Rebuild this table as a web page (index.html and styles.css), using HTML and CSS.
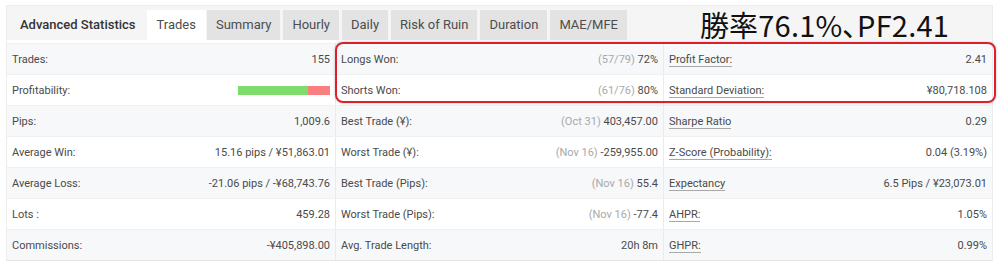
FILE: index.html
```html
<!DOCTYPE html>
<html lang="ja">
<head>
<meta charset="utf-8">
<link rel="stylesheet" href="styles.css">
</head>
<body>
<div class="panel">
  <div class="head">
    <div class="title">Advanced Statistics</div>
    <div class="tab active">Trades</div>
    <div class="tab">Summary</div>
    <div class="tab">Hourly</div>
    <div class="tab">Daily</div>
    <div class="tab">Risk of Ruin</div>
    <div class="tab">Duration</div>
    <div class="tab">MAE/MFE</div>
    <div class="annot">勝率76.1%、PF2.41</div>
  </div>
  <div class="table">
    <div class="row odd">
      <div class="cell"><span>Trades:</span><span>155</span></div>
      <div class="cell"><span>Longs Won:</span><span><span class="muted">(57/79)</span> 72%</span></div>
      <div class="cell"><span class="ul">Profit Factor:</span><span>2.41</span></div>
    </div>
    <div class="row">
      <div class="cell"><span>Profitability:</span><span class="bar"><span class="win" style="width:76%"></span><span class="loss"></span></span></div>
      <div class="cell"><span>Shorts Won:</span><span><span class="muted">(61/76)</span> 80%</span></div>
      <div class="cell"><span class="ul">Standard Deviation:</span><span>¥80,718.108</span></div>
    </div>
    <div class="row odd">
      <div class="cell"><span>Pips:</span><span>1,009.6</span></div>
      <div class="cell"><span>Best Trade (¥):</span><span><span class="muted">(Oct 31)</span> 403,457.00</span></div>
      <div class="cell"><span class="ul">Sharpe Ratio</span><span>0.29</span></div>
    </div>
    <div class="row">
      <div class="cell"><span>Average Win:</span><span>15.16 pips / ¥51,863.01</span></div>
      <div class="cell"><span>Worst Trade (¥):</span><span><span class="muted">(Nov 16)</span> -259,955.00</span></div>
      <div class="cell"><span class="ul">Z-Score (Probability):</span><span>0.04 (3.19%)</span></div>
    </div>
    <div class="row odd">
      <div class="cell"><span>Average Loss:</span><span>-21.06 pips / -¥68,743.76</span></div>
      <div class="cell"><span>Best Trade (Pips):</span><span><span class="muted">(Nov 16)</span> 55.4</span></div>
      <div class="cell"><span class="ul">Expectancy</span><span>6.5 Pips / ¥23,073.01</span></div>
    </div>
    <div class="row">
      <div class="cell"><span>Lots :</span><span>459.28</span></div>
      <div class="cell"><span>Worst Trade (Pips):</span><span><span class="muted">(Nov 16)</span> -77.4</span></div>
      <div class="cell"><span class="ul">AHPR:</span><span>1.05%</span></div>
    </div>
    <div class="row odd">
      <div class="cell"><span>Commissions:</span><span>-¥405,898.00</span></div>
      <div class="cell"><span>Avg. Trade Length:</span><span>20h 8m</span></div>
      <div class="cell"><span class="ul">GHPR:</span><span>0.99%</span></div>
    </div>
    <div class="highlight"></div>
  </div>
</div>
</body>
</html>
```
FILE: styles.css
```css
html, body {
  margin: 0;
  padding: 0;
  background: #ffffff;
}
body {
  font-family: Roboto, "Liberation Sans", sans-serif;
  color: #4a4a4a;
}
.panel {
  margin: 5px 7px 0 6px;
  border-left: 1px solid #ececec;
  border-right: 1px solid #ececec;
}
.head {
  display: flex;
  align-items: flex-end;
  height: 35px;
  background: #f5f5f5;
  border-top: 1px solid #eeeeee;
  box-sizing: border-box;
}
.title {
  font-size: 13px;
  font-weight: 500;
  color: #333;
  height: 30px;
  line-height: 30px;
  padding: 0 11px 0 13px;
}
.tab {
  font-size: 13px;
  color: #4d4d4d;
  background: #e3e3e3;
  height: 30px;
  line-height: 30px;
  padding: 0 9px;
  margin-right: 3px;
}
.tab.active {
  background: #ffffff;
  padding: 0 10px;
  margin-right: 1px;
}
.annot {
  margin-left: auto;
  margin-right: 43px;
  align-self: center;
  font-family: "Noto Sans CJK JP", sans-serif;
  font-feature-settings: "palt";
  font-size: 29px;
  letter-spacing: 0.2px;
  line-height: 30px;
  color: #111;
  padding-top: 1px;
}
.table {
  position: relative;
  padding-top: 3px;
  border-bottom: 1px solid #e6e6e6;
}
.row {
  display: grid;
  grid-template-columns: 329px 328px 1fr;
  height: 31px;
  background: #ffffff;
  border-top: 1px solid #f0f0f0;
  box-sizing: border-box;
}
.row.odd {
  background: #f6f8fa;
}
.cell {
  display: flex;
  justify-content: space-between;
  align-items: center;
  padding: 0 5px 0 5px;
  font-size: 11px;
  border-right: 1px solid #ebebeb;
}
.cell:last-child {
  border-right: none;
}
.muted {
  color: #a9a9a9;
}
.ul {
  border-bottom: 1px solid #a8a8a8;
  line-height: 13px;
  padding-top: 2px;
}
.bar {
  display: flex;
  width: 92px;
  height: 9px;
}
.win {
  background: #7ddc6c;
}
.loss {
  flex: 1;
  background: #fb7f80;
}
.highlight {
  position: absolute;
  left: 328px;
  top: 2px;
  width: 661px;
  height: 61px;
  border: 2px solid #dc1f2a;
  border-radius: 8px;
  box-shadow: 0 0 3px rgba(0,0,0,0.25);
  box-sizing: border-box;
  pointer-events: none;
}
```
